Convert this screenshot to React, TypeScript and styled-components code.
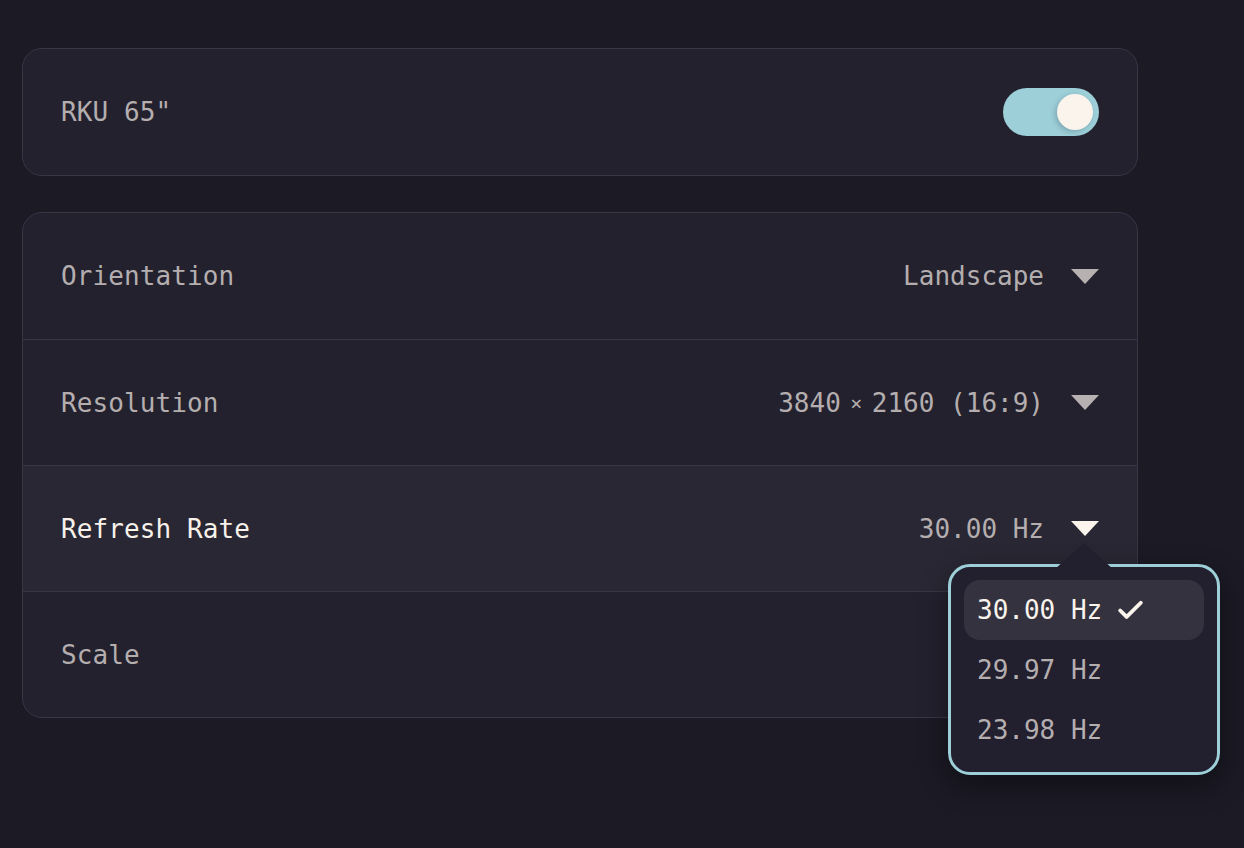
import React from "react";
import styled, { createGlobalStyle } from "styled-components";

const Global = createGlobalStyle`
  html, body {
    margin: 0;
    padding: 0;
    background: #1b1a25;
  }
  body {
    font-family: "DejaVu Sans Mono", "Liberation Mono", monospace;
    -webkit-font-smoothing: antialiased;
  }
`;

const Page = styled.div`
  min-height: 848px;
  box-sizing: border-box;
  padding: 48px 0 0 22px;
  display: flex;
  flex-direction: column;
  gap: 36px;
`;

const Card = styled.div`
  width: 1116px;
  box-sizing: border-box;
  background: #23212e;
  border: 1px solid #383645;
  border-radius: 20px;
  display: flex;
  flex-direction: column;
`;

const Row = styled.div<{ $active?: boolean; $divider?: boolean }>`
  position: relative;
  height: 126px;
  box-sizing: border-box;
  padding: 0 38px;
  display: flex;
  align-items: center;
  justify-content: space-between;
  background: ${(p) => (p.$active ? "#292733" : "transparent")};
  border-top: ${(p) => (p.$divider ? "1px solid #383645" : "none")};
  &:first-child {
    border-top-left-radius: 19px;
    border-top-right-radius: 19px;
  }
  &:last-child {
    border-bottom-left-radius: 19px;
    border-bottom-right-radius: 19px;
  }
`;

const Label = styled.span<{ $active?: boolean }>`
  font-size: 26px;
  color: ${(p) => (p.$active ? "#f7f1ea" : "#b4aeaf")};
  letter-spacing: 0.1px;
`;

const Select = styled.div`
  display: flex;
  align-items: center;
  gap: 27px;
`;

const Value = styled.span`
  font-size: 26px;
  color: #b4aeaf;
  display: inline-flex;
  align-items: center;
  white-space: pre;
`;

const Times = styled.span`
  display: inline-block;
  width: 31px;
  text-align: center;
  font-size: 20px;
`;

const Caret = styled.svg<{ $active?: boolean }>`
  width: 28px;
  height: 15px;
  display: block;
  fill: ${(p) => (p.$active ? "#faf4ed" : "#b7b1b1")};
`;

const Toggle = styled.div`
  width: 96px;
  height: 48px;
  border-radius: 24px;
  background: #9ccfd8;
  position: relative;
`;

const Knob = styled.div`
  position: absolute;
  top: 6px;
  right: 6px;
  width: 36px;
  height: 36px;
  border-radius: 50%;
  background: #faf4ed;
  box-shadow: -2px 2px 5px rgba(40, 60, 70, 0.25);
`;

const Popover = styled.div`
  position: absolute;
  top: 98px;
  right: -83px;
  width: 272px;
  box-sizing: border-box;
  padding: 13px 13px 12px;
  background: #221f2f;
  border: 3px solid #9ccfd8;
  border-radius: 22px;
  box-shadow: 0 10px 28px rgba(0, 0, 0, 0.4);
  z-index: 5;
  display: flex;
  flex-direction: column;
  &::before {
    content: "";
    position: absolute;
    top: -24px;
    left: 104px;
    width: 58px;
    height: 26px;
    background: #221f2f;
    clip-path: polygon(50% 0, 100% 100%, 0 100%);
  }
`;

const Option = styled.div<{ $selected?: boolean }>`
  height: 60px;
  box-sizing: border-box;
  padding: 0 13px;
  display: flex;
  align-items: center;
  gap: 13px;
  border-radius: 16px;
  font-size: 26px;
  background: ${(p) => (p.$selected ? "#35323f" : "transparent")};
  color: ${(p) => (p.$selected ? "#faf4ed" : "#b4aeaf")};
`;

const Check = styled.svg`
  width: 31px;
  height: 31px;
  display: block;
  fill: none;
  stroke: #faf4ed;
  stroke-width: 3;
  stroke-linecap: round;
  stroke-linejoin: round;
`;

const CaretIcon = ({ active }: { active?: boolean }) => (
  <Caret $active={active} viewBox="0 0 28 15">
    <polygon points="0,0 28,0 14,15" />
  </Caret>
);

const rates = ["30.00 Hz", "29.97 Hz", "23.98 Hz"];

export default function App() {
  return (
    <>
      <Global />
      <Page>
        <Card>
          <Row>
            <Label>RKU 65"</Label>
            <Toggle>
              <Knob />
            </Toggle>
          </Row>
        </Card>
        <Card>
          <Row>
            <Label>Orientation</Label>
            <Select>
              <Value>Landscape</Value>
              <CaretIcon />
            </Select>
          </Row>
          <Row $divider>
            <Label>Resolution</Label>
            <Select>
              <Value>
                3840<Times>×</Times>2160 (16:9)
              </Value>
              <CaretIcon />
            </Select>
          </Row>
          <Row $divider $active>
            <Label $active>Refresh Rate</Label>
            <Select>
              <Value>30.00 Hz</Value>
              <CaretIcon active />
            </Select>
            <Popover>
              {rates.map((r, i) => (
                <Option key={r} $selected={i === 0}>
                  {r}
                  {i === 0 && (
                    <Check viewBox="0 0 24 24">
                      <path d="M20 6 9 17l-5-5" />
                    </Check>
                  )}
                </Option>
              ))}
            </Popover>
          </Row>
          <Row $divider>
            <Label>Scale</Label>
          </Row>
        </Card>
      </Page>
    </>
  );
}
